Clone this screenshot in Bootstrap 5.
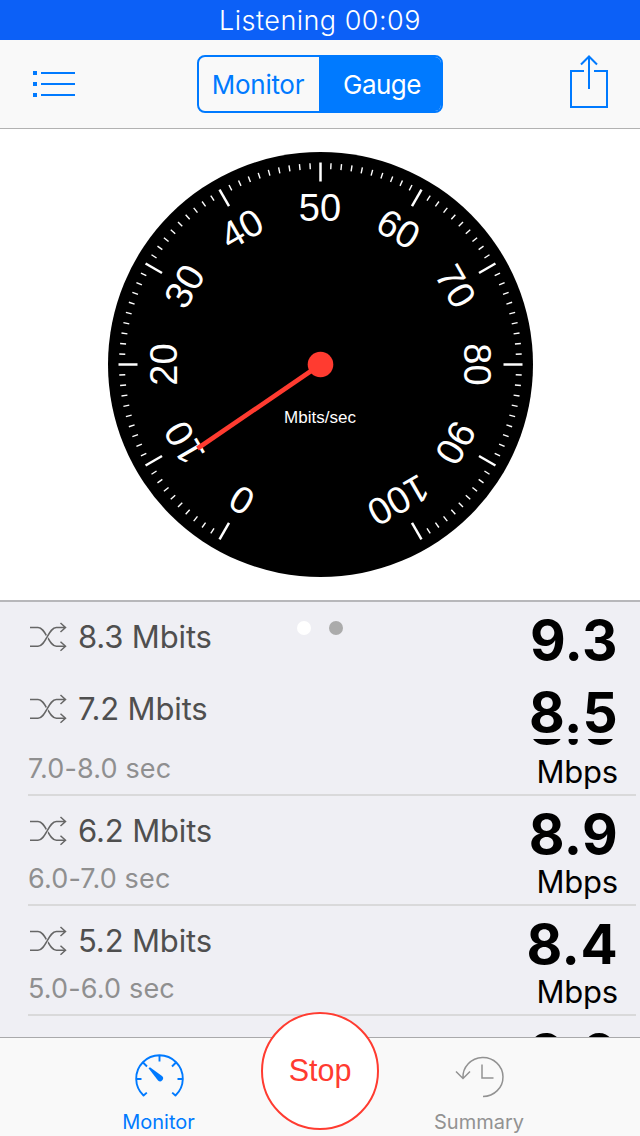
<!DOCTYPE html>
<html lang="en">
<head>
<meta charset="utf-8">
<meta name="viewport" content="width=device-width, initial-scale=1">
<title>Bandwidth gauge</title>
<link href="https://cdn.jsdelivr.net/npm/bootstrap@5.3.0/dist/css/bootstrap.min.css" rel="stylesheet">
<style>
  :root { --ios-blue: #007aff; --ios-red: #ff3b30; --bar: #f9f9f9; --hair: #b2b2b2; }
  body { font-family: Inter, "Liberation Sans", sans-serif; color: #000; font-size: 27px; }
  svg { display: block; flex: none; }
  .screen { height: 1136px; width: 640px; }
  .status { height: 40px; background: #0c60f7; font-size: 27px; letter-spacing: .47px; line-height: 42px; font-weight: 300; }
  .topbar { height: 89px; background: var(--bar); border-bottom: 1px solid var(--hair); padding: 0 31px 0 33px; }
  .segments { width: 246px; height: 58px; border: 2px solid var(--ios-blue); border-radius: 8px; margin-right: 6px; }
  .segments .btn { border: 0; border-radius: 0; padding: 0; font-size: 26px; color: var(--ios-blue); line-height: 55px; letter-spacing: -.3px; }
  .segments .seg-m { width: 120px; padding-right: 2px; }
  .segments .seg-g { width: 122px; padding-left: 4px; letter-spacing: -.5px; }
  .segments .btn.active { background: var(--ios-blue); color: #fff; }
  .share { margin-bottom: 4px; }
  .dial { height: 471px; padding-top: 23px; }
  .dial text { font-family: "Liberation Sans", sans-serif; fill: #fff; text-anchor: middle; }
  .samples { height: 437px; background: #efeff4; border-top: 2px solid #b7b7ba; }
  .sample { height: 110px; padding: 0 22px 0 28px; }
  .sample.head { height: 72px; }
  .sample.moving { height: 122px; }
  .rule::after { content: ""; position: absolute; left: 28px; right: 4px; bottom: 0; height: 2px; background: #d9d9da; }
  .amount { height: 70px; font-size: 31px; color: #4f4f4f; gap: 10px; padding-left: 1px; letter-spacing: -.15px; }
  .span { height: 26px; line-height: 26px; font-size: 27px; color: #8f8f90; letter-spacing: .15px; }
  .rate { height: 76px; line-height: 76px; font-size: 55px; font-weight: 700; letter-spacing: .4px; }
  .unit { height: 20px; line-height: 20px; font-size: 31px; letter-spacing: -.2px; }
  .moving .span { margin-top: 12px; }
  .moving .unit { margin-top: 12px; }
  .trail { right: 22px; top: 65px; height: 7px; line-height: 1; font-size: 55px; font-weight: 700; letter-spacing: .4px; }
  .trail span { margin-bottom: -6px; }
  .dots { left: 297px; top: 19px; gap: 18px; }
  .dots i { width: 14px; height: 14px; background: #ababab; }
  .dots i:first-child { background: #fff; }
  .tabs { height: 99px; background: var(--bar); border-top: 1px solid #a9a9ab; font-size: 20px; }
  .tab { width: 120px; padding-top: 16px; line-height: 24px; gap: 10px; }
  .tab-a { margin-left: 98.500px; color: var(--ios-blue); }
  .tab-b { margin-right: 101px; color: #929292; }
  .stop { left: 261px; top: -26px; width: 118px; height: 118px; padding: 0 0 2px; background: #fff !important; border: 2px solid var(--ios-red); color: var(--ios-red); font: 30.5px "Liberation Sans", sans-serif; }
</style>
</head>
<body>
<div class="screen d-flex flex-column overflow-hidden bg-white">
  <div class="status text-white text-center">Listening 00:09</div>

  <nav class="topbar d-flex align-items-center justify-content-between">
    <svg width="43" height="28" viewBox="0 0 43 28" fill="#007aff"><path d="M0 1h4v4H0zM8 2h34v2H8zM0 12h4v4H0zM8 13h34v2H8zM0 23h4v4H0zM8 24h34v2H8z"/></svg>
    <div class="segments d-flex overflow-hidden">
      <button class="btn seg-m">Monitor</button>
      <button class="btn active seg-g">Gauge</button>
    </div>
    <svg class="share" width="39" height="56" viewBox="0 0 39 56" fill="none" stroke="#007aff" stroke-width="2"><path d="M14 17H1v36h36V17H24M19 35V3M11 10.500l8-8 8 8"/></svg>
  </nav>

  <div class="dial d-flex justify-content-center">
    <svg width="426" height="426" viewBox="-213 -212.500 426 426">
      <circle cx="0.500" r="212.500"/>
      <g id="scale" transform="translate(.500 0)" stroke="#fff"></g>
      <g id="numbers" transform="translate(0 0)" font-size="38"></g>
      <text x="0" y="58" font-size="17">Mbits/sec</text>
      <path d="M.5 0L-122.500 84" stroke="#ff3b30" stroke-width="4.600"/>
      <circle cx=".5" r="12.800" fill="#ff3b30"/>
    </svg>
  </div>

  <main class="samples position-relative overflow-hidden">
    <div class="dots d-flex position-absolute"><i class="rounded-circle"></i><i class="rounded-circle"></i></div>
    <div class="sample head d-flex justify-content-between">
      <div class="amount d-flex align-items-center"><svg width="39" height="30"><use href="#shuffle"/></svg><span>8.3 Mbits</span></div>
      <div class="rate">9.3</div>
    </div>
    <div class="sample moving rule position-relative d-flex justify-content-between">
      <div><div class="amount d-flex align-items-center"><svg width="39" height="30"><use href="#shuffle"/></svg><span>7.2 Mbits</span></div><div class="span">7.0-8.0 sec</div></div>
      <div class="text-end"><div class="rate">8.5</div><div class="unit">Mbps</div></div>
      <div class="trail position-absolute overflow-hidden d-flex align-items-end"><span>8.5</span></div>
    </div>
    <div class="sample rule position-relative d-flex justify-content-between">
      <div><div class="amount d-flex align-items-center"><svg width="39" height="30"><use href="#shuffle"/></svg><span>6.2 Mbits</span></div><div class="span">6.0-7.0 sec</div></div>
      <div class="text-end"><div class="rate">8.9</div><div class="unit">Mbps</div></div>
    </div>
    <div class="sample rule position-relative d-flex justify-content-between">
      <div><div class="amount d-flex align-items-center"><svg width="39" height="30"><use href="#shuffle"/></svg><span>5.2 Mbits</span></div><div class="span">5.0-6.0 sec</div></div>
      <div class="text-end"><div class="rate">8.4</div><div class="unit">Mbps</div></div>
    </div>
    <div class="sample d-flex justify-content-end"><div class="rate">9.0</div></div>
  </main>

  <footer class="tabs position-relative d-flex justify-content-between">
    <div class="tab tab-a d-flex flex-column align-items-center">
      <svg width="50" height="46" viewBox="0 0 50 46" fill="none" stroke="#007aff" stroke-width="1.900"><path d="M9.500 41.500A23.300 23.300 0 1 1 41.500 41.500M9 42l3.800-3.400M42 42l-3.800-3.400M2 25h5.500M49 25h-5.500M25.500 1.500v6M9 8.500l4 4M42 8.500l-4 4"/><path d="M14.500 14.300l1.500-1 12 8.700a3 3 0 0 1-4 4.500z" fill="#007aff" stroke="none"/></svg>
      <span>Monitor</span>
    </div>
    <button class="stop btn rounded-circle position-absolute">Stop</button>
    <div class="tab tab-b d-flex flex-column align-items-center">
      <svg width="50" height="46" viewBox="0 0 50 46" fill="none" stroke="#929292" stroke-width="1.500"><path d="M9 24A20 19.500 0 1 1 29 42.500M2 17.500l7 7 7-7M28 10.500V24h11.500"/></svg>
      <span>Summary</span>
    </div>
  </footer>
</div>

<svg width="0" height="0" class="position-absolute">
  <symbol id="shuffle" viewBox="0 0 39 30">
    <g fill="none" stroke="#666" stroke-width="1.500">
      <path d="M1 5.500h8c4 0 6.500 4.500 9.200 9.300s5.200 9.400 9.200 9.400H36"/>
      <path d="M16.500 17.500L20 12" stroke="#efeff4" stroke-width="3"/>
      <path d="M1 24.200h8c4 0 6.500-4.600 9.200-9.400s5.200-9.300 9.200-9.300H36M31.500 1l5 4.500-5 4.500M31.500 19.700l5 4.500-5 4.500"/>
    </g>
  </symbol>
</svg>

<script src="https://cdn.jsdelivr.net/npm/bootstrap@5.3.0/dist/js/bootstrap.bundle.min.js"></script>
<script>
  // 0 to 100 Mbits spans 300 degrees, starting at the lower left
  let ticks = '', labels = '';
  for (let v = 0; v <= 100; v++) {
    const a = 210 + v * 3, major = v % 10 === 0;
    ticks += `<path d="M0-${major ? 202 : 201.5}V-${major ? 183 : 195.5}" stroke-width="${major ? 2.5 : 1.4}" transform="rotate(${a})"/>`;
    if (major) labels += `<text y="-143.500" transform="rotate(${a})">${v}</text>`;
  }
  document.getElementById('scale').innerHTML = ticks;
  document.getElementById('numbers').innerHTML = labels;
</script>
</body>
</html>
